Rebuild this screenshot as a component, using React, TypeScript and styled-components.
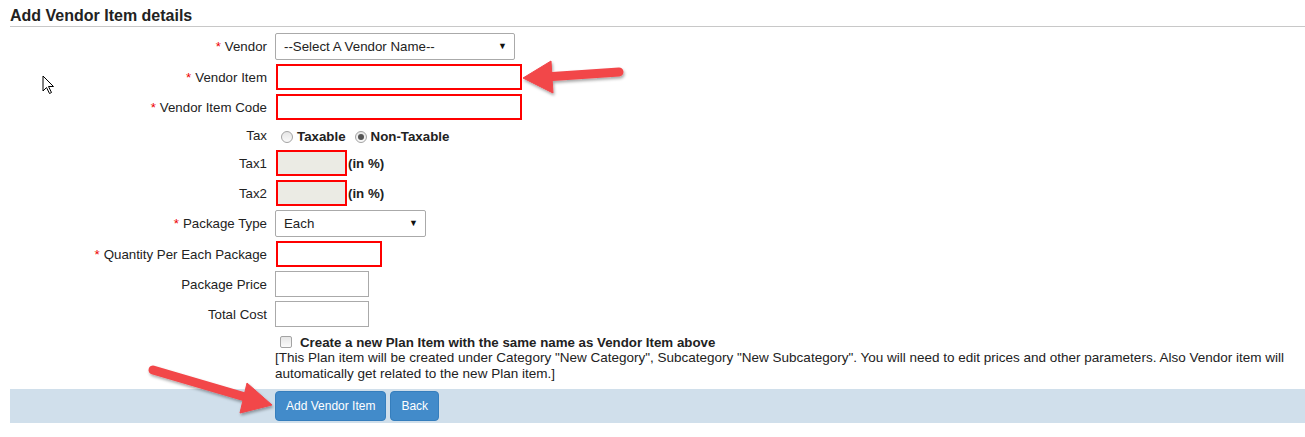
import React from 'react';
import styled, {createGlobalStyle} from 'styled-components';

const GlobalStyle = createGlobalStyle`
    body{
        margin: 0;
        background: #fff;
        font-family: "Liberation Sans", Arial, sans-serif;
        font-size: 13px;
        color: #333;
    }
`

const Page = styled.div`
    position: relative;
    width: 1305px;
    height: 437px;
    padding: 6px 0 0 10px;
    box-sizing: border-box;
    overflow: hidden;
`

const Title = styled.h3`
    margin: 0;
    font-size: 16px;
    font-weight: bold;
    color: #222;
    line-height: 19px;
    padding-bottom: 1px;
    border-bottom: 1px solid #c8c8c8;
`

const Form = styled.div`
    display: grid;
    grid-template-columns: 257px 1fr;
    column-gap: 8px;
    row-gap: 4px;
    align-items: center;
    margin-top: 6px;
`

const Label = styled.label`
    text-align: right;
    font-size: 13.3px;
    color: #222;
    white-space: nowrap;
`

const Star = styled.span`
    color: #e00;
    margin-right: 4px;
`

const Field = styled.div`
    display: flex;
    align-items: center;
`

const OptionRow = styled.div<{ $h: number; $top?: number }>`
    display: flex;
    align-items: center;
    box-sizing: border-box;
    height: ${p => p.$h}px;
    padding-top: ${p => p.$top || 0}px;
`

const SelectWrap = styled.div<{ $w: number }>`
    position: relative;
    width: ${p => p.$w}px;
    &::after{
        content: '▼';
        position: absolute;
        right: 8px;
        top: 8px;
        font-size: 9px;
        color: #111;
        pointer-events: none;
    }
`

const Select = styled.select`
    appearance: none;
    width: 100%;
    height: 27px;
    border: 1px solid #aaa;
    border-radius: 2px;
    background: #fff;
    font-family: inherit;
    font-size: 13.3px;
    color: #222;
    padding: 0 8px;
    margin: 0;
`

const Input = styled.input<{ $w: number; $req?: boolean; $off?: boolean }>`
    box-sizing: border-box;
    width: ${p => p.$w}px;
    height: 26px;
    margin: 0 0 0 ${p => p.$req ? 1 : 0}px;
    border: ${p => p.$req ? '2px solid #f00' : '1px solid #aaa'};
    background: ${p => p.$off ? '#ebebe4' : '#fff'};
    font-family: inherit;
    font-size: 13px;
    padding: 0 4px;
    outline: none;
`

const Unit = styled.span`
    font-weight: bold;
    font-size: 13.3px;
    color: #222;
    margin-left: 1px;
`

const Radio = styled.input`
    appearance: none;
    width: 12px;
    height: 12px;
    margin: 0 4px 0 6px;
    border-radius: 50%;
    border: 1px solid #a3a3a3;
    background: linear-gradient(#e6e6e6, #fafafa);
    position: relative;
    &:checked::after{
        content: '';
        position: absolute;
        left: 2px;
        top: 2px;
        width: 6px;
        height: 6px;
        border-radius: 50%;
        background: #555;
    }
`

const RadioText = styled.span`
    font-weight: bold;
    font-size: 13.3px;
    color: #222;
    margin-right: 3px;
`

const Check = styled.input`
    appearance: none;
    width: 12px;
    height: 12px;
    margin: 0 0 0 5px;
    border: 1px solid #a3a3a3;
    border-radius: 2px;
    background: linear-gradient(#e6e6e6, #fafafa);
`

const CheckText = styled.span`
    font-weight: bold;
    font-size: 13.3px;
    color: #222;
    margin-left: 8px;
`

const Extra = styled.div`
    grid-column: 2;
    padding-right: 12px;
    margin-top: 3px;
`

const Note = styled.div`
    font-size: 13.5px;
    line-height: 16px;
    color: #222;
`

const Footer = styled.div`
    display: grid;
    grid-template-columns: 257px 1fr;
    column-gap: 8px;
    background: #d0dfeb;
    padding: 2px 0;
    margin-top: 7px;
`

const Buttons = styled.div`
    grid-column: 2;
    display: flex;
    gap: 4px;
`

const Button = styled.button`
    height: 30px;
    padding: 0 10px;
    background: #428bca;
    border: 1px solid #357ebd;
    border-radius: 4px;
    color: #fff;
    font-family: inherit;
    font-size: 12px;
`

const Overlay = styled.svg`
    position: absolute;
    left: 0;
    top: 0;
    pointer-events: none;
`

function Marks(){
    return (
        <Overlay width="1305" height="437">
            <defs>
                <filter id="sh" x="-20%" y="-20%" width="140%" height="140%">
                    <feDropShadow dx="1" dy="2" stdDeviation="1.5" floodColor="#000" floodOpacity="0.35"/>
                </filter>
            </defs>
            <g fill="#f2464a" stroke="#f2464a" filter="url(#sh)">
                <line x1="545" y1="77" x2="619" y2="72" strokeWidth="9" strokeLinecap="round"/>
                <polygon points="523,78 551,61 553,93" strokeWidth="1"/>
                <line x1="153" y1="370" x2="252" y2="399" strokeWidth="9" strokeLinecap="round"/>
                <polygon points="272,405 247,383 240,413" strokeWidth="1"/>
            </g>
            <path d="M43 76 L43 91 L46.5 87.5 L49.5 93.5 L51.5 92.5 L48.5 86.5 L53.5 86.5 Z"
                  fill="#fff" stroke="#000" strokeWidth="1"/>
        </Overlay>
    )
}

function App(){
    return (
        <Page>
            <GlobalStyle/>
            <Title>Add Vendor Item details</Title>
            <Form>
                <Label><Star>*</Star>Vendor</Label>
                <Field>
                    <SelectWrap $w={240}>
                        <Select defaultValue="">
                            <option value="">--Select A Vendor Name--</option>
                        </Select>
                    </SelectWrap>
                </Field>

                <Label><Star>*</Star>Vendor Item</Label>
                <Field><Input $w={246} $req/></Field>

                <Label><Star>*</Star>Vendor Item Code</Label>
                <Field><Input $w={246} $req/></Field>

                <Label>Tax</Label>
                <OptionRow $h={22} $top={3}>
                    <Radio type="radio" name="tax"/>
                    <RadioText>Taxable</RadioText>
                    <Radio type="radio" name="tax" defaultChecked/>
                    <RadioText>Non-Taxable</RadioText>
                </OptionRow>

                <Label>Tax1</Label>
                <Field><Input $w={71} $req $off disabled/><Unit>(in %)</Unit></Field>

                <Label>Tax2</Label>
                <Field><Input $w={71} $req $off disabled/><Unit>(in %)</Unit></Field>

                <Label><Star>*</Star>Package Type</Label>
                <Field>
                    <SelectWrap $w={151}>
                        <Select defaultValue="each">
                            <option value="each">Each</option>
                        </Select>
                    </SelectWrap>
                </Field>

                <Label><Star>*</Star>Quantity Per Each Package</Label>
                <Field><Input $w={106} $req/></Field>

                <Label>Package Price</Label>
                <Field><Input $w={94}/></Field>

                <Label>Total Cost</Label>
                <Field><Input $w={94}/></Field>

                <Extra>
                    <OptionRow $h={16}>
                        <Check type="checkbox"/>
                        <CheckText>Create a new Plan Item with the same name as Vendor Item above</CheckText>
                    </OptionRow>
                    <Note>
                        [This Plan item will be created under Category "New Category", Subcategory "New Subcategory". You will need to edit prices and other parameters. Also Vendor item will automatically get related to the new Plan item.]
                    </Note>
                </Extra>
            </Form>
            <Footer>
                <Buttons>
                    <Button>Add Vendor Item</Button>
                    <Button>Back</Button>
                </Buttons>
            </Footer>
            <Marks/>
        </Page>
    );
}

export default App;
